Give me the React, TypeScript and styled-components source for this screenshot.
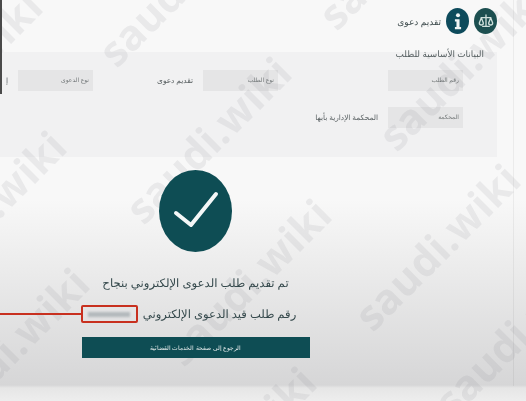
import React from "react";
import styled, { createGlobalStyle } from "styled-components";

const Global = createGlobalStyle`
  html, body { margin: 0; padding: 0; background: #f7f7f7; }
  body { font-family: "Noto Sans", "Liberation Sans", sans-serif; text-rendering: geometricPrecision; }
`;

const Screen = styled.div`
  position: relative;
  width: 526px;
  height: 401px;
  overflow: hidden;
  direction: rtl;
  filter: blur(0.6px);
  background: linear-gradient(
    180deg,
    #f8f8f8 0,
    #f8f8f8 200px,
    #ececec 265px,
    #d6d6d7 385px,
    #e6e6e6 388px,
    #ededed 401px
  );
`;

const Content = styled.div`
  position: relative;
  display: flex;
  flex-direction: column;
  padding: 8px 29px 0 0;
`;

const Header = styled.header`
  display: flex;
  align-items: center;
  gap: 5px;
  height: 26px;
`;

const IconBadge = styled.div<{ $bg: string }>`
  width: 23px;
  height: 26px;
  border-radius: 50%;
  background: ${(p) => p.$bg};
  display: flex;
  align-items: center;
  justify-content: center;
`;

const Title = styled.h1`
  margin: 0;
  font-size: 9px;
  font-weight: 500;
  color: #3d4a4c;
`;

const Panel = styled.section`
  margin-top: 18px;
  height: 105px;
  background: rgba(120, 120, 140, 0.055);
  padding: 0 34px 0 0;
`;

const SectionTitle = styled.h2`
  margin: 0 -21px 0 0;
  height: 18px;
  font-size: 8.9px;
  line-height: 3px;
  font-weight: 500;
  color: #535c5e;
`;

const FieldRow = styled.div`
  display: grid;
  grid-template-columns: 185px 185px 95px;
  height: 37px;
  align-items: start;
`;

const Field = styled.div`
  display: flex;
  align-items: center;
  gap: 10px;
  height: 21px;
`;

const FieldLabel = styled.div`
  width: 75px;
  height: 21px;
  flex: none;
  background: rgba(110, 110, 110, 0.09);
  font-size: 6px;
  line-height: 21px;
  color: #737879;
  padding-right: 4px;
  box-sizing: border-box;
`;

const FieldValue = styled.div`
  font-size: 7.4px;
  color: #5a6163;
  white-space: nowrap;
`;

const Success = styled.main`
  margin-top: 13px;
  width: 391px;
  display: flex;
  flex-direction: column;
  align-items: center;
  align-self: flex-end;
`;

const Check = styled.div`
  width: 73px;
  height: 82px;
  border-radius: 50%;
  background: #0e4d54;
  display: flex;
  align-items: center;
  justify-content: center;
`;

const Message = styled.p`
  margin: 22px 0 0;
  font-size: 11.7px;
  line-height: 18px;
  font-weight: 500;
  color: #35494c;
  white-space: nowrap;
`;

const NumberRow = styled.div`
  margin: 13px 14px 0 0;
  display: flex;
  align-items: center;
  gap: 5px;
  height: 18px;
  font-size: 11.6px;
  font-weight: 500;
  color: #35494c;
  white-space: nowrap;
`;

const NumberBox = styled.div`
  position: relative;
  width: 57px;
  height: 18px;
  box-sizing: border-box;
  border: 2px solid #c8301f;
  border-radius: 2px;
  display: flex;
  align-items: center;
  justify-content: center;
`;

const Redacted = styled.div`
  width: 42px;
  height: 5px;
  background: #b4babd;
  filter: blur(1.2px);
`;

const Connector = styled.div`
  position: absolute;
  top: 6px;
  right: 100%;
  width: 82px;
  height: 2px;
  margin-right: 2px;
  background: #c8301f;
`;

const BackButton = styled.button`
  margin-top: 14px;
  width: 228px;
  height: 21px;
  border: 0;
  padding: 0;
  background: #0e4d54;
  color: #e8eeee;
  font-family: inherit;
  font-size: 5.9px;
`;

const EdgeMark = styled.div`
  position: absolute;
  left: 0;
  top: 0;
  width: 1.5px;
  height: 94px;
  background: #4a4a4a;
`;

const PageEdge = styled.div`
  position: absolute;
  left: 513px;
  top: 0;
  width: 1px;
  height: 386px;
  background: rgba(0, 0, 0, 0.05);
`;

const Mark = styled.div<{ $x: number; $y: number }>`
  position: absolute;
  left: ${(p) => p.$x}px;
  top: ${(p) => p.$y}px;
  transform: translate(-50%, -50%) rotate(-45deg);
  direction: ltr;
  font-family: "Open Sans", "Noto Sans", sans-serif;
  font-size: 42px;
  font-weight: 700;
  color: rgba(120, 120, 125, 0.11);
  white-space: nowrap;
  pointer-events: none;
`;

const marks = [
  [208, 140],
  [181, -17],
  [-17, 214],
  [248, 282],
  [6, 351],
  [437, 247],
  [461, 67],
  [401, -54],
  [517, 333],
  [-41, 74],
  [233, 450],
];

export default function App() {
  return (
    <Screen>
      <Global />
      <PageEdge />
      {marks.map(([x, y]) => (
        <Mark key={`${x}-${y}`} $x={x} $y={y}>
          saudi.wiki
        </Mark>
      ))}
      <Content>
        <Header>
          <IconBadge $bg="#1c4f50">
            <svg width="16" height="16" viewBox="0 0 24 24" fill="none" stroke="#cfe0dc" strokeWidth="2" strokeLinecap="round" strokeLinejoin="round">
              <path d="M12 3v17M7 20h10M5 7h14" />
              <path d="M2 15l3-8 3 8a3 3 0 0 1-6 0zM16 15l3-8 3 8a3 3 0 0 1-6 0z" />
            </svg>
          </IconBadge>
          <IconBadge $bg="#0e4b5c">
            <svg width="8" height="17" viewBox="0 0 10 22" fill="#f2f5f5">
              <circle cx="5" cy="3" r="2.6" />
              <path d="M1 8h6v10h2v3H1v-3h2v-7H1z" />
            </svg>
          </IconBadge>
          <Title>تقديم دعوى</Title>
        </Header>
        <Panel>
          <SectionTitle>البيانات الأساسية للطلب</SectionTitle>
          <FieldRow>
            <Field>
              <FieldLabel>رقم الطلب</FieldLabel>
            </Field>
            <Field>
              <FieldLabel>نوع الطلب</FieldLabel>
              <FieldValue>تقديم دعوى</FieldValue>
            </Field>
            <Field>
              <FieldLabel>نوع الدعوى</FieldLabel>
              <FieldValue>إ</FieldValue>
            </Field>
          </FieldRow>
          <FieldRow>
            <Field>
              <FieldLabel>المحكمة</FieldLabel>
              <FieldValue>المحكمة الإدارية بأبها</FieldValue>
            </Field>
          </FieldRow>
        </Panel>
        <Success>
          <Check>
            <svg width="46" height="40" viewBox="0 0 46 40" fill="none" stroke="#f4f7f7" strokeWidth="4" strokeLinecap="round" strokeLinejoin="round">
              <path d="M3 22l15 12L43 3" />
            </svg>
          </Check>
          <Message>تم تقديم طلب الدعوى الإلكتروني بنجاح</Message>
          <NumberRow>
            <span>رقم طلب قيد الدعوى الإلكتروني</span>
            <NumberBox>
              <Redacted />
              <Connector />
            </NumberBox>
          </NumberRow>
          <BackButton>الرجوع إلى صفحة الخدمات القضائية</BackButton>
        </Success>
      </Content>
      <EdgeMark />
    </Screen>
  );
}
